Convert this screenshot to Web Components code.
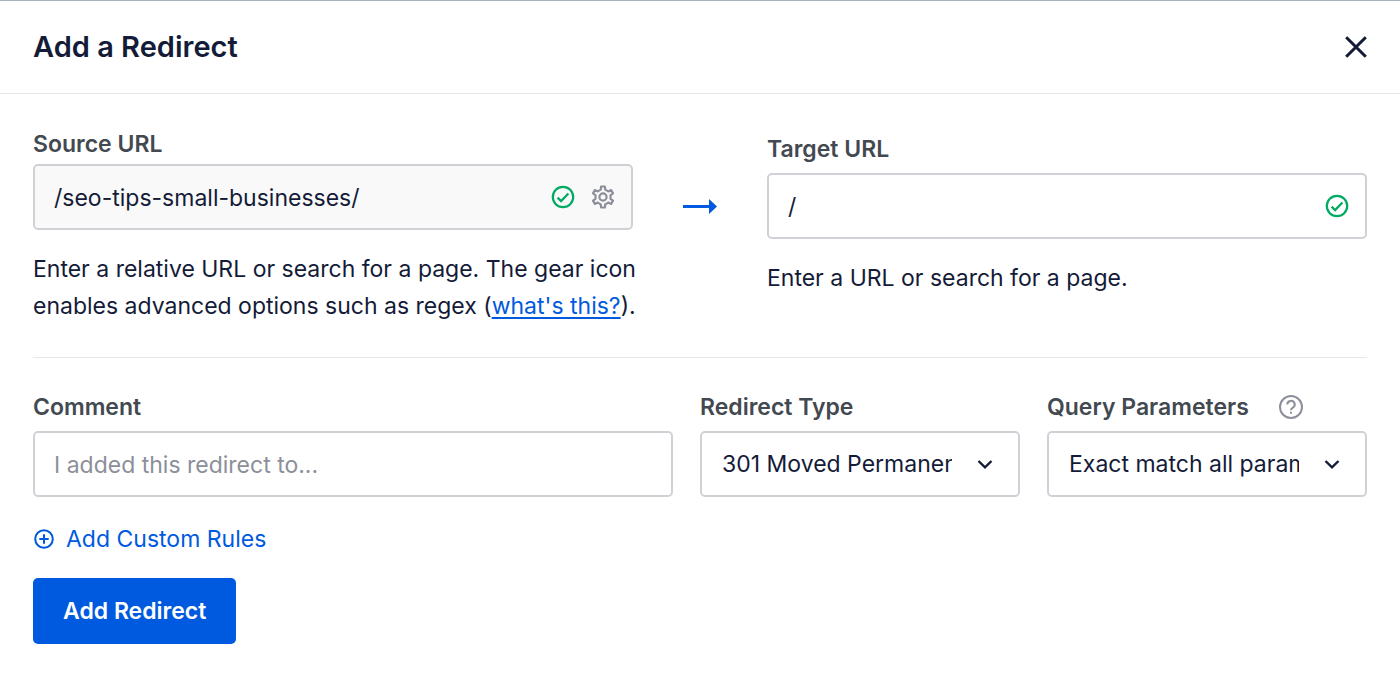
<!DOCTYPE html>
<html lang="en">
<head>
<meta charset="utf-8">
<meta name="viewport" content="width=device-width, initial-scale=1">
<title>Add a Redirect</title>
<style>
  :root {
    --navy: #141b38;
    --label: #434950;
    --blue: #005ae0;
    --green: #00aa63;
    --grey: #8c8f9a;
    --border: #d0d1d7;
    --line: #e8e8eb;
  }
  body {
    margin: 0;
    background: #fff;
    color: var(--navy);
    font: 23px/28px Inter, "Liberation Sans", sans-serif;
  }
</style>
</head>
<body>
<redirect-modal heading="Add a Redirect">
  <redirect-form></redirect-form>
</redirect-modal>

<script>
const ICONS = {
  close: `<path d="M1.2 1.2l19.600 19.600M20.800 1.200l-19.600 19.600" fill="none" stroke="currentColor" stroke-width="3"/>`,
  check: `<g fill="none" stroke="currentColor" stroke-width="2.2"><circle cx="12" cy="12" r="10.2"/><path d="M6.6 12.6l3.5 3.5 7.3-7.6"/></g>`,
  gear: `<g fill="none" stroke="currentColor" stroke-width="2.2" stroke-linejoin="round"><path d="M9.8 4.6l.3-3.1h3.8l.3 3.1 3.1 1.8 2.8-1.3L22 8.4l-2.500 1.800v3.600l2.500 1.800-1.900 3.300-2.800-1.300-3.100 1.800-.3 3.100h-3.800l-.3-3.100-3.100-1.800-2.800 1.300L2 15.600l2.500-1.800v-3.600L2 8.400l1.900-3.300 2.800 1.300z"/><circle cx="12" cy="12" r="3.6"/></g>`,
  arrow: `<path d="M0 6h26V0l8 7.5-8 7.5V9H0z" fill="currentColor"/>`,
  chevron: `<path d="M1.5 2L8 8.400 14.500 2" fill="none" stroke="currentColor" stroke-width="2.4"/>`,
  help: `<g fill="none" stroke="currentColor" stroke-width="2"><circle cx="12" cy="12" r="11"/><path d="M8.3 9.6a3.7 3.7 0 1 1 5.600 3.100c-1.300.8-1.900 1.300-1.900 2.500"/></g><path d="M11 16.800h2v2h-2z" fill="currentColor"/>`,
  plus: `<g fill="none" stroke="currentColor" stroke-width="2"><circle cx="11" cy="11" r="8.8"/><path d="M11 6.300v9.400M6.300 11h9.400"/></g>`
};

const SIZES = {
  close: [22, 22],
  check: [24, 24],
  gear: [24, 24],
  arrow: [34, 15],
  chevron: [16, 11],
  help: [24, 24],
  plus: [22, 22]
};

class UiIcon extends HTMLElement {
  constructor() {
    super();
    this.attachShadow({ mode: "open" });
  }

  static get styles() {
    return /* css */`
      :host {
        display: inline-flex;
        flex: none;
      }
      svg {
        display: block;
      }
    `;
  }

  connectedCallback() {
    const name = this.getAttribute("name");
    const [width, height] = SIZES[name];
    this.shadowRoot.innerHTML = /* html */`
    <style>${UiIcon.styles}</style>
    <svg width="${width}" height="${height}" viewBox="0 0 ${width} ${height}" aria-hidden="true">${ICONS[name]}</svg>`;
  }
}

customElements.define("ui-icon", UiIcon);

// Label + bordered box, shared by text and select fields
const fieldStyles = /* css */`
  :host {
    display: block;
    min-width: 0;
  }
  .top {
    display: flex;
    align-items: center;
    gap: 30px;
    margin-bottom: var(--label-gap, 10px);
  }
  label {
    color: var(--label);
    font-weight: 600;
  }
  .top ui-icon {
    color: var(--grey);
  }
  .box {
    box-sizing: border-box;
    height: 66px;
    border: 2px solid var(--border);
    border-radius: 5px;
    background: var(--box-background, #fff);
  }
  input, select {
    box-sizing: border-box;
    min-width: 0;
    height: 100%;
    margin: 0;
    border: 0;
    outline: 0;
    background: none;
    color: inherit;
    font: inherit;
  }
`;

class TextField extends HTMLElement {
  constructor() {
    super();
    this.attachShadow({ mode: "open" });
  }

  static get styles() {
    return /* css */`
      ${fieldStyles}
      .box {
        display: flex;
        align-items: center;
        gap: 16px;
        padding: 0 16px 0 19px;
      }
      input {
        flex: 1;
        padding: 2px 0 0;
      }
      input::placeholder {
        color: var(--grey);
        opacity: 1;
      }
      ::slotted(p) {
        margin: 21px -16px 0 0;
        line-height: 37px;
      }
    `;
  }

  connectedCallback() {
    const value = this.getAttribute("value") || "";
    const placeholder = this.getAttribute("placeholder") || "";
    this.shadowRoot.innerHTML = /* html */`
    <style>${TextField.styles}</style>
    <div class="top"><label for="field">${this.getAttribute("label")}</label></div>
    <div class="box">
      <input id="field" type="text" value="${value}" placeholder="${placeholder}" spellcheck="false">
      <slot name="icons"></slot>
    </div>
    <slot></slot>`;
  }
}

customElements.define("text-field", TextField);

class SelectField extends HTMLElement {
  constructor() {
    super();
    this.attachShadow({ mode: "open" });
  }

  static get styles() {
    return /* css */`
      ${fieldStyles}
      .box {
        display: grid;
        align-items: center;
      }
      select, .box ui-icon {
        grid-area: 1 / 1;
      }
      select {
        width: 100%;
        padding: 0 66px 0 20px;
        appearance: none;
      }
      .box ui-icon {
        justify-self: end;
        margin-right: 25px;
        pointer-events: none;
      }
    `;
  }

  connectedCallback() {
    const options = this.getAttribute("options").split("|");
    this.shadowRoot.innerHTML = /* html */`
    <style>${SelectField.styles}</style>
    <div class="top">
      <label for="field">${this.getAttribute("label")}</label>
      ${this.hasAttribute("help") ? `<ui-icon name="help"></ui-icon>` : ""}
    </div>
    <div class="box">
      <select id="field">${options.map((option) => `<option>${option}</option>`).join("")}</select>
      <ui-icon name="chevron"></ui-icon>
    </div>`;
  }
}

customElements.define("select-field", SelectField);

class RedirectForm extends HTMLElement {
  constructor() {
    super();
    this.attachShadow({ mode: "open" });
  }

  static get styles() {
    return /* css */`
      :host {
        display: block;
        padding: 36px 33px 33px;
      }
      form {
        margin: 0;
      }
      .urls {
        display: grid;
        grid-template-columns: minmax(0, 1fr) 134px minmax(0, 1fr);
        align-items: start;
        padding-bottom: 32px;
        border-bottom: 1px solid var(--line);
      }
      .source {
        --label-gap: 6px;
        --box-background: #f9f9f9;
      }
      .target {
        padding-top: 5px;
      }
      .arrow {
        display: flex;
        align-items: center;
        justify-content: center;
        height: 66px;
        padding-top: 43px;
        color: var(--blue);
      }
      .ok {
        color: var(--green);
      }
      button {
        margin: 0;
        padding: 0;
        border: 0;
        background: none;
        font: inherit;
        cursor: pointer;
      }
      .gear {
        display: flex;
        color: var(--grey);
      }
      a {
        color: var(--blue);
        text-underline-offset: 3px;
        text-decoration-thickness: 2px;
      }
      .options {
        display: grid;
        grid-template-columns: minmax(0, 2fr) minmax(0, 1fr) minmax(0, 1fr);
        gap: 27px;
        margin-top: 35px;
      }
      .rules {
        display: flex;
        align-items: center;
        gap: 11px;
        margin: 28px 0 25px;
        color: var(--blue);
      }
      .submit {
        height: 66px;
        padding: 0 30px;
        border-radius: 5px;
        background: var(--blue);
        color: #fff;
        font-weight: 600;
      }
    `;
  }

  connectedCallback() {
    this.shadowRoot.innerHTML = /* html */`
    <style>${RedirectForm.styles}</style>
    <form>
      <div class="urls">
        <text-field class="source" label="Source URL" value="/seo-tips-small-businesses/">
          <ui-icon class="ok" slot="icons" name="check"></ui-icon>
          <button class="gear" slot="icons" type="button" aria-label="Advanced options"><ui-icon name="gear"></ui-icon></button>
          <p>Enter a relative URL or search for a page. The gear icon enables advanced options such as regex (<a href="#regex">what's this?</a>).</p>
        </text-field>
        <div class="arrow"><ui-icon name="arrow"></ui-icon></div>
        <text-field class="target" label="Target URL" value="/">
          <ui-icon class="ok" slot="icons" name="check"></ui-icon>
          <p>Enter a URL or search for a page.</p>
        </text-field>
      </div>
      <div class="options">
        <text-field label="Comment" placeholder="I added this redirect to..."></text-field>
        <select-field label="Redirect Type" options="301 Moved Permanently|302 Found|307 Temporary Redirect|410 Gone"></select-field>
        <select-field label="Query Parameters" help options="Exact match all parameters|Ignore all parameters|Pass all parameters"></select-field>
      </div>
      <button class="rules" type="button"><ui-icon name="plus"></ui-icon>Add Custom Rules</button>
      <button class="submit" type="submit">Add Redirect</button>
    </form>`;
    this.shadowRoot.querySelector("form").addEventListener("submit", (ev) => ev.preventDefault());
  }
}

customElements.define("redirect-form", RedirectForm);

class RedirectModal extends HTMLElement {
  constructor() {
    super();
    this.attachShadow({ mode: "open" });
  }

  static get styles() {
    return /* css */`
      :host {
        display: block;
        border-top: 1px solid #a9b1c0;
      }
      header {
        display: flex;
        align-items: center;
        justify-content: space-between;
        padding: 28px 33px;
        border-bottom: 1px solid var(--line);
      }
      h1 {
        margin: 0;
        font-size: 29px;
        line-height: 36px;
        font-weight: 600;
      }
      button {
        display: flex;
        margin: 0;
        padding: 0;
        border: 0;
        background: none;
        color: inherit;
        cursor: pointer;
      }
    `;
  }

  connectedCallback() {
    this.shadowRoot.innerHTML = /* html */`
    <style>${RedirectModal.styles}</style>
    <header>
      <h1>${this.getAttribute("heading")}</h1>
      <button type="button" aria-label="Close"><ui-icon name="close"></ui-icon></button>
    </header>
    <slot></slot>`;
  }
}

customElements.define("redirect-modal", RedirectModal);
</script>
</body>
</html>
